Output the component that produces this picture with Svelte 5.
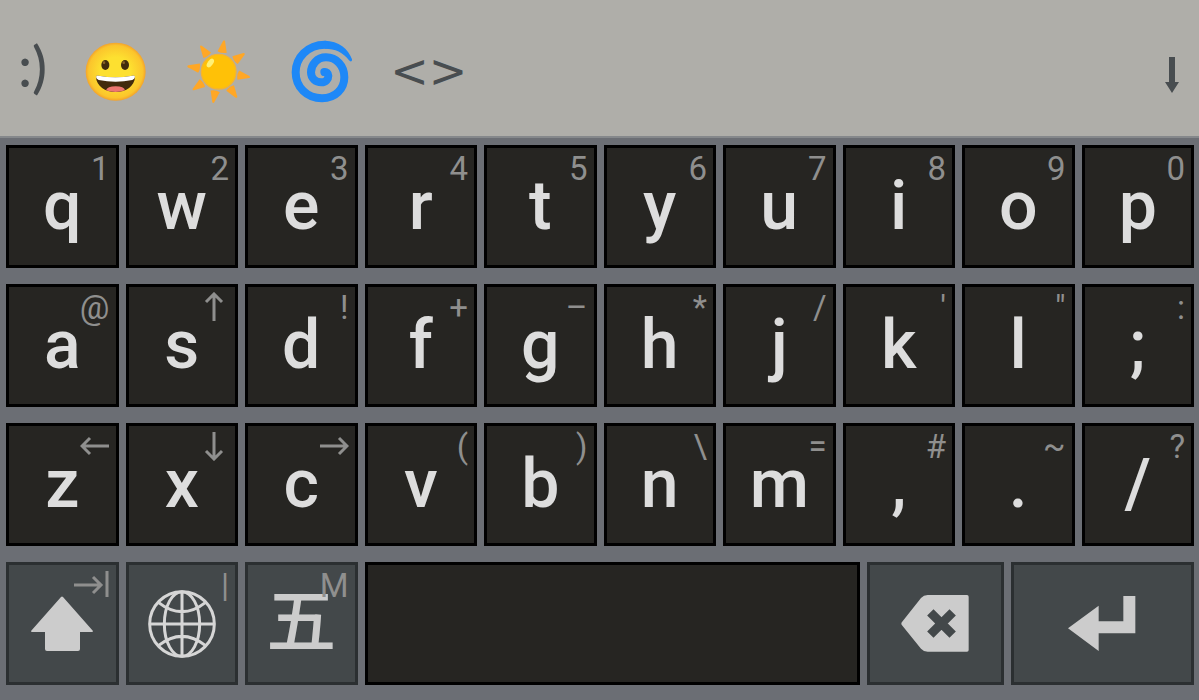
<script>
    let pressed = $state('');

    const rows = [
        [['q', '1'], ['w', '2'], ['e', '3'], ['r', '4'], ['t', '5'], ['y', '6'], ['u', '7'], ['i', '8'], ['o', '9'], ['p', '0']],
        [['a', '@'], ['s', 'up'], ['d', '!'], ['f', '+'], ['g', '–'], ['h', '*'], ['j', '/'], ['k', "'"], ['l', '"'], [';', ':']],
        [['z', 'left'], ['x', 'down'], ['c', 'right'], ['v', '('], ['b', ')'], ['n', '\\'], ['m', '='], [',', '#'], ['.', '~'], ['/', '?']]
    ];

    // turn of the right-pointing arrow, in degrees
    const arrows = { right: 0, down: 90, left: 180, up: 270 };

    const rays = [0, 45, 90, 135, 180, 225, 270, 315];

    function press(key) {
        pressed = key;
    }
</script>

<main class="keyboard">
    <div class="toolbar">
        <button class="tab" onclick={() => press('emoticons')}>:)</button>
        <button class="tab picture" aria-label="Smileys" onclick={() => press('smileys')}>
            <svg class="emoji" viewBox="258 57 189 189">
                <defs>
                    <radialGradient id="face">
                        <stop offset="0.5" stop-color="#fde030" />
                        <stop offset="0.9" stop-color="#fbc52c" />
                        <stop offset="1" stop-color="#f3a32c" />
                    </radialGradient>
                </defs>
                <ellipse cx="353" cy="152" rx="90" ry="87" fill="url(#face)" />
                <ellipse cx="322" cy="132" rx="12" ry="15" fill="#422b0d" />
                <ellipse cx="381" cy="132" rx="12" ry="15" fill="#422b0d" />
                <circle cx="318" cy="125" r="4" fill="#896024" />
                <circle cx="377" cy="125" r="4" fill="#896024" />
                <path d="M294 169q0-7 8-5q50 10 101 0q8-2 8 5c-2 27-26 44-58 44s-57-17-59-44z" fill="#422b0d" />
                <path d="M294 168q1-6 8-4q50 10 101 0q8-2 8 4q-1 6-8 9q-50 10-101 0q-7-3-8-9z" fill="#fff" />
                <path d="M324 208q4-12 29-12t28 12q-28 10-57 0z" fill="#ed7770" />
            </svg>
        </button>
        <button class="tab picture" aria-label="Weather" onclick={() => press('weather')}>
            <svg class="emoji" viewBox="566 57 189 189">
                {#each rays as angle}
                    <path d="M647 92q14 6 28 0l-11-33q-3-5-6 0z" fill="#ffa726" transform="rotate({angle + 10} 661 152)" />
                {/each}
                <circle cx="661" cy="152" r="52" fill="#ffc107" stroke="#f4b431" stroke-width="4" />
                <ellipse cx="636" cy="126" rx="8" ry="15" fill="#fff176" transform="rotate(35 636 126)" />
            </svg>
        </button>
        <button class="tab picture" aria-label="Symbols" onclick={() => press('symbols')}>
            <svg class="emoji" viewBox="154 58 189 189">
                <path d="M258 60c42 0 72 25 82 56c1 7-5 8-9 3c-18-24-41-35-73-35z" fill="#1e88f7" />
                <path d="M259 72C206 72 171 112 171 155C171 200 205 233 250 233C290 233 317 205 317 170C317 135 293 110 262 110C235 110 217 132 217 155C217 173 231 185 248 185C262 185 269 175 269 165C269 157 263 153 257 154" fill="none" stroke="#1e88f7" stroke-width="24" stroke-linecap="round" />
            </svg>
        </button>
        <button class="tab brackets" onclick={() => press('brackets')}>&lt;&gt;</button>
        <button class="tab close" aria-label="Hide keyboard" onclick={() => press('hide')}>
            <svg width="14" height="38" viewBox="0 0 14 38"><path d="M4 1h6v25h4L7 37L0 26h4z" fill="#484d50" /></svg>
        </button>
    </div>

    <div class="keys">
        {#each rows as row}
            <div class="row">
                {#each row as [letter, hint]}
                    <button class="key" onclick={() => press(letter)}>
                        {letter}
                        {#if hint in arrows}
                            <span class="hint arrow">
                                <svg width="30" height="30" viewBox="0 0 30 30">
                                    <path d="M1 15h27M20 7l8 8l-8 8" transform="rotate({arrows[hint]} 15 15)" />
                                </svg>
                            </span>
                        {:else}
                            <span class="hint">{hint}</span>
                        {/if}
                    </button>
                {/each}
            </div>
        {/each}

        <div class="row bottom">
            <button class="key special" aria-label="Shift" onclick={() => press('shift')}>
                <svg width="62" height="55" viewBox="0 0 62 55">
                    <path d="M30 1q1-1 2 0l30 34q0 1-1 1H49v17q0 2-2 2H16q-2 0-2-2V36H1q-1 0-1-1z" fill="#ccc" />
                </svg>
                <span class="hint arrow">
                    <svg width="36" height="30" viewBox="0 0 36 30">
                        <path d="M0 15h27M19 7l8 8l-8 8M33 1v26" />
                    </svg>
                </span>
            </button>
            <button class="key special" aria-label="Language" onclick={() => press('language')}>
                <svg width="68" height="68" viewBox="444 120 204 204" fill="none" stroke="#d6d6d6" stroke-width="9">
                    <circle cx="546" cy="222" r="97" />
                    <ellipse cx="546" cy="222" rx="53" ry="97" />
                    <path d="M546 125v194M449 222h194M475 157q71 56 142 0M475 287q71-56 142 0" />
                </svg>
                <span class="hint">|</span>
            </button>
            <button class="key special cjk" onclick={() => press('wubi')}>
                五
                <span class="hint">M</span>
            </button>
            <button class="key" aria-label="Space" onclick={() => press(' ')}></button>
            <button class="key special" aria-label="Backspace" onclick={() => press('backspace')}>
                <svg width="68" height="57" viewBox="184 135 204 171">
                    <path d="M264 135H382q5 0 5 5V300q0 5-5 5H264q-12 0-20-9L187 226q-4-5 0-10L244 144q8-9 20-9z" fill="#ccc" />
                    <path d="M272 187l67 67M339 187l-67 67" stroke="#43484a" stroke-width="27" />
                </svg>
            </button>
            <button class="key special" aria-label="Enter" onclick={() => press('enter')}>
                <svg width="68" height="55" viewBox="687 141 204 165">
                    <path d="M687 238L779 170V217H853V141H889V253H779V306z" fill="#ccc" />
                </svg>
            </button>
        </div>
    </div>
</main>

<style>
    :global(body) {
        margin: 0;
        background: #6b6e74;
    }

    button {
        margin: 0;
        padding: 0;
        border: 0;
        background: none;
        cursor: pointer;
    }

    svg {
        display: block;
    }

    .keyboard {
        min-height: 100vh;
        background: #6b6e74;
    }

    .toolbar {
        box-sizing: border-box;
        height: 138px;
        padding: 6px 20px 0 18px;
        display: flex;
        align-items: center;
        gap: 34px;
        background: #afaea9;
        border-bottom: 2px solid #85888b;
    }

    .tab {
        padding-bottom: 10px;
        font: 500 56px/60px Lato, sans-serif;
        color: #484d50;
    }

    .picture {
        padding: 0 3px;
    }

    .brackets {
        padding: 0;
        font: 400 46px/60px "DejaVu Sans", sans-serif;
    }

    .close {
        margin-left: auto;
        padding: 8px 0 0;
    }

    .emoji {
        width: 63px;
        height: 63px;
    }

    .keys {
        padding: 7px 5px 15px 6px;
        display: grid;
        gap: 16px;
    }

    .row {
        display: grid;
        grid-template-columns: repeat(10, minmax(0, 1fr));
        gap: 7px;
    }

    .bottom {
        grid-template-columns: 225fr 225fr 225fr 991fr 273fr 367fr;
    }

    .key {
        position: relative;
        box-sizing: border-box;
        height: 123px;
        padding-bottom: 2px;
        display: flex;
        align-items: center;
        justify-content: center;
        border: 3px solid #000;
        background: #262522;
        color: #ddd;
        font: 500 68px/86px Roboto, sans-serif;
    }

    .special {
        padding-bottom: 0;
        border-color: #2b2f31;
        background: #43484a;
        color: #ccc;
    }

    .cjk {
        padding-bottom: 14px;
        font: 500 70px/86px "Noto Sans CJK SC", sans-serif;
    }

    .hint {
        position: absolute;
        top: 2px;
        right: 6px;
        color: #8f8f8e;
        font: 400 33px/38px Roboto, sans-serif;
    }

    .arrow {
        top: 5px;
    }

    .arrow path {
        fill: none;
        stroke: #8f8f8e;
        stroke-width: 3;
    }
</style>
